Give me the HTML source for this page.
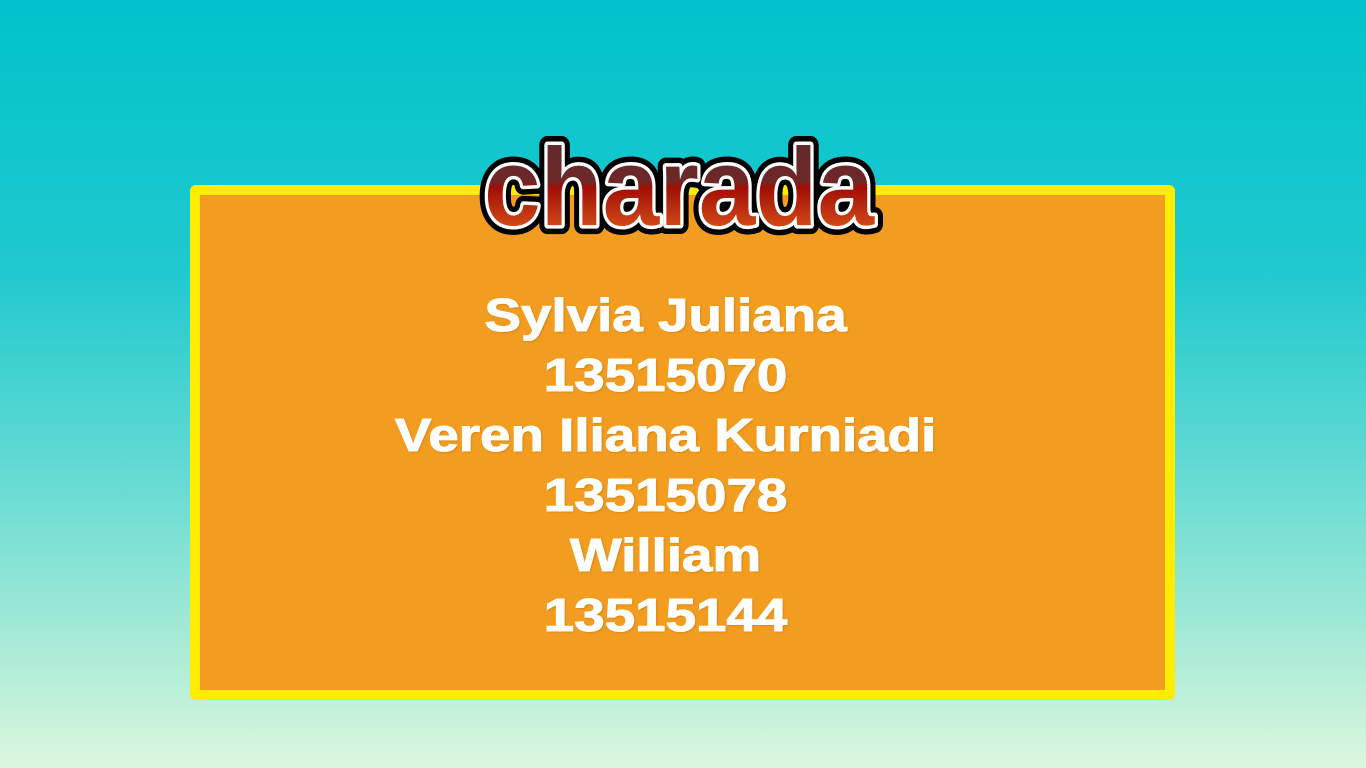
<!DOCTYPE html>
<html><head><meta charset="utf-8"><style>
html,body{margin:0;padding:0}
body{width:1366px;height:768px;overflow:hidden;position:relative;background:linear-gradient(180deg,#00c3cb 0%,#1fc9cf 35%,#6dddd3 65%,#b5eed8 88%,#dcf7df 100%);font-family:"Liberation Sans",sans-serif}
.box{position:absolute;left:190px;top:185px;width:965px;height:495px;border:10px solid #ffed00;border-radius:6px;background:#f39d20}
.txt{position:absolute;left:173px;width:985px;top:285px;text-align:center;color:#fff;font-weight:bold;font-size:46px;line-height:60px;-webkit-text-stroke:1px #fff;transform:scaleX(1.19);transform-origin:492px 0;text-shadow:1px 1px 2px rgba(150,80,0,.4)}
svg{position:absolute;left:470px;top:125px}
</style></head><body>
<div class="box"></div>
<svg width="420" height="120" viewBox="0 0 420 120">
<defs><linearGradient id="g" x1="0" y1="0" x2="0" y2="1">
<stop offset="0" stop-color="#5e2a2c"/><stop offset="0.45" stop-color="#6e2828"/><stop offset="0.5" stop-color="#a00e05"/><stop offset="1" stop-color="#f06a20"/></linearGradient></defs>
<text x="14" y="100" textLength="390" lengthAdjust="spacingAndGlyphs" font-family="Liberation Sans" font-weight="bold" font-size="110" stroke="#000" stroke-width="18" stroke-linejoin="round" fill="#000">charada</text>
<text x="14" y="100" textLength="390" lengthAdjust="spacingAndGlyphs" font-family="Liberation Sans" font-weight="bold" font-size="110" stroke="#fff" stroke-width="7" stroke-linejoin="round" fill="url(#g)" paint-order="stroke">charada</text>
</svg>
<div class="txt">Sylvia Juliana<br>13515070<br>Veren Iliana Kurniadi<br>13515078<br>William<br>13515144</div>
</body></html>
